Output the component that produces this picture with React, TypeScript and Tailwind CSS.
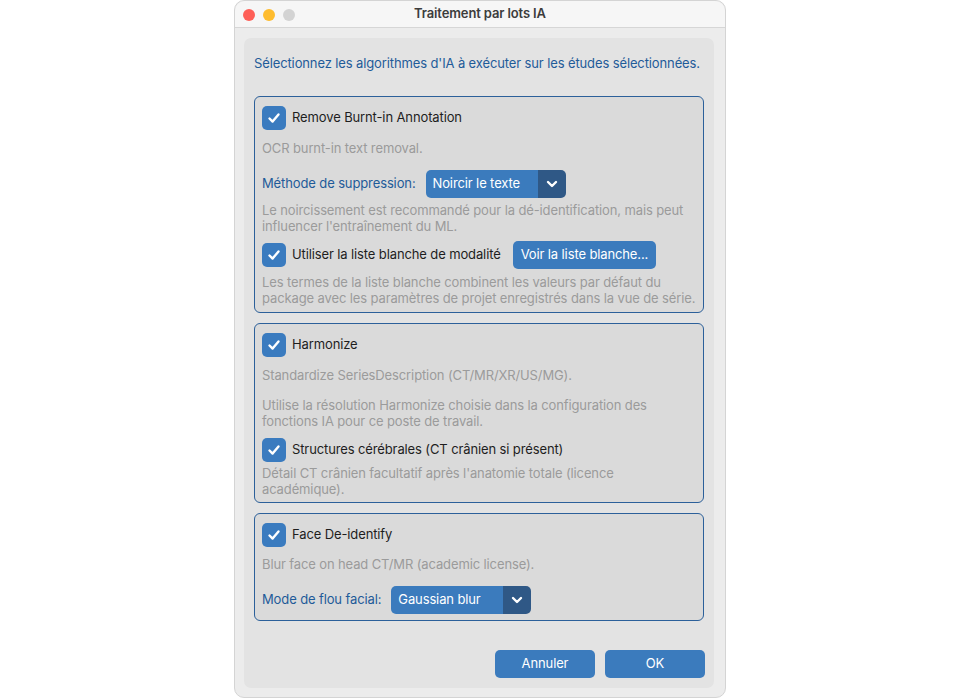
import React from "react";

const Check = () => (
  <span className="flex h-6 w-6 shrink-0 items-center justify-center rounded-[5px] bg-[#3a7bbf]">
    <svg width="14" height="14" viewBox="0 0 14 14" fill="none">
      <path d="M2.5 7.5 L5.6 10.6 L11.5 3.4" stroke="white" strokeWidth="2.4" strokeLinecap="round" strokeLinejoin="round" />
    </svg>
  </span>
);

const Chevron = () => (
  <svg width="12" height="8" viewBox="0 0 12 8" fill="none">
    <path d="M2 2 L6 6 L10 2" stroke="white" strokeWidth="2.4" strokeLinecap="round" strokeLinejoin="round" />
  </svg>
);

const Select = (props: { value: string; width: string }) => (
  <div className={`flex h-7 overflow-hidden rounded-[5px] ${props.width}`}>
    <div className="flex flex-1 items-center bg-[#3b7bbd] pl-[7px] text-[13px] text-white">{props.value}</div>
    <div className="flex w-7 items-center justify-center bg-[#2f5886]">
      <Chevron />
    </div>
  </div>
);

const Hint = (props: { children: React.ReactNode; className?: string }) => (
  <p className={`text-[13px] leading-4 text-[#9b9b9b] ${props.className || ""}`}>{props.children}</p>
);

const Option = (props: { label: string; className?: string }) => (
  <div className={`flex h-6 items-center gap-[6px] ${props.className || ""}`}>
    <Check />
    <span className="text-[13px] text-[#1e1e1e]">{props.label}</span>
  </div>
);

const Group = (props: { children: React.ReactNode; className?: string }) => (
  <div className={`rounded-[6px] border border-[#2c609a] bg-[#dadada] px-[7px] ${props.className || ""}`}>
    {props.children}
  </div>
);

export default function App() {
  return (
    <div
      className="flex h-[698px] w-[960px] justify-center bg-white tracking-[-0.12px]"
      style={{ fontFamily: "Inter, 'Liberation Sans', sans-serif" }}
    >
      <div className="flex w-[492px] flex-col rounded-[10px] border border-[#d4d4d4] bg-[#ececec]">
        <div className="relative flex h-[27px] shrink-0 items-center justify-center rounded-t-[10px] border-b border-[#d6d6d6] bg-[#f6f6f6]">
          <div className="absolute left-[8px] top-[8px] flex gap-2">
            <span className="h-3 w-3 rounded-full bg-[#fe5f57]" />
            <span className="h-3 w-3 rounded-full bg-[#febc2e]" />
            <span className="h-3 w-3 rounded-full bg-[#d3d3d3]" />
          </div>
          <span className="text-[13px] font-semibold text-[#3c3c3c]">Traitement par lots IA</span>
        </div>
        <div className="ml-[9px] mt-[10px] flex h-[650px] w-[470px] flex-col rounded-[7px] bg-[#e3e3e3] px-[10px] pb-[10px]">
          <p className="mt-[17px] whitespace-nowrap text-[13px] leading-4 text-[#1f5b99]">
            Sélectionnez les algorithmes d'IA à exécuter sur les études sélectionnées.
          </p>

          <Group className="mt-[25px] pt-[9px] pb-[6px]">
            <Option label="Remove Burnt-in Annotation" />
            <Hint className="mt-[10px]">OCR burnt-in text removal.</Hint>
            <div className="mt-[14px] flex items-center gap-[10px]">
              <span className="text-[13px] text-[#1f5b99]">Méthode de suppression:</span>
              <Select value="Noircir le texte" width="w-[140px]" />
            </div>
            <Hint className="mt-[4px]">
              Le noircissement est recommandé pour la dé-identification, mais peut influencer l'entraînement du ML.
            </Hint>
            <div className="mt-[7px] flex h-7 items-center">
              <Option label="Utiliser la liste blanche de modalité" />
              <button className="ml-[12px] h-7 rounded-[5px] bg-[#3b7bbd] px-[8px] text-[13px] text-white">
                Voir la liste blanche...
              </button>
            </div>
            <Hint className="mt-[5px]">
              Les termes de la liste blanche combinent les valeurs par défaut du package avec les paramètres de projet enregistrés dans la vue de série.
            </Hint>
          </Group>

          <Group className="mt-[10px] pt-[9px] pb-[5px]">
            <Option label="Harmonize" />
            <Hint className="mt-[10px]">Standardize SeriesDescription (CT/MR/XR/US/MG).</Hint>
            <Hint className="mt-[14px]">
              Utilise la résolution Harmonize choisie dans la configuration des fonctions IA pour ce poste de travail.
            </Hint>
            <Option label="Structures cérébrales (CT crânien si présent)" className="mt-[9px]" />
            <Hint className="mt-[3px]">
              Détail CT crânien facultatif après l'anatomie totale (licence académique).
            </Hint>
          </Group>

          <Group className="mt-[10px] pt-[9px] pb-[6px]">
            <Option label="Face De-identify" />
            <Hint className="mt-[9px]">Blur face on head CT/MR (academic license).</Hint>
            <div className="mt-[14px] flex items-center gap-[10px]">
              <span className="text-[13px] text-[#1f5b99]">Mode de flou facial:</span>
              <Select value="Gaussian blur" width="w-[140px]" />
            </div>
          </Group>

          <div className="mr-[-1px] mt-auto flex justify-end gap-[10px]">
            <button className="h-7 w-[100px] rounded-[5px] bg-[#3b7bbd] text-[13px] text-white">Annuler</button>
            <button className="h-7 w-[100px] rounded-[5px] bg-[#3b7bbd] text-[13px] text-white">OK</button>
          </div>
        </div>
      </div>
    </div>
  );
}
